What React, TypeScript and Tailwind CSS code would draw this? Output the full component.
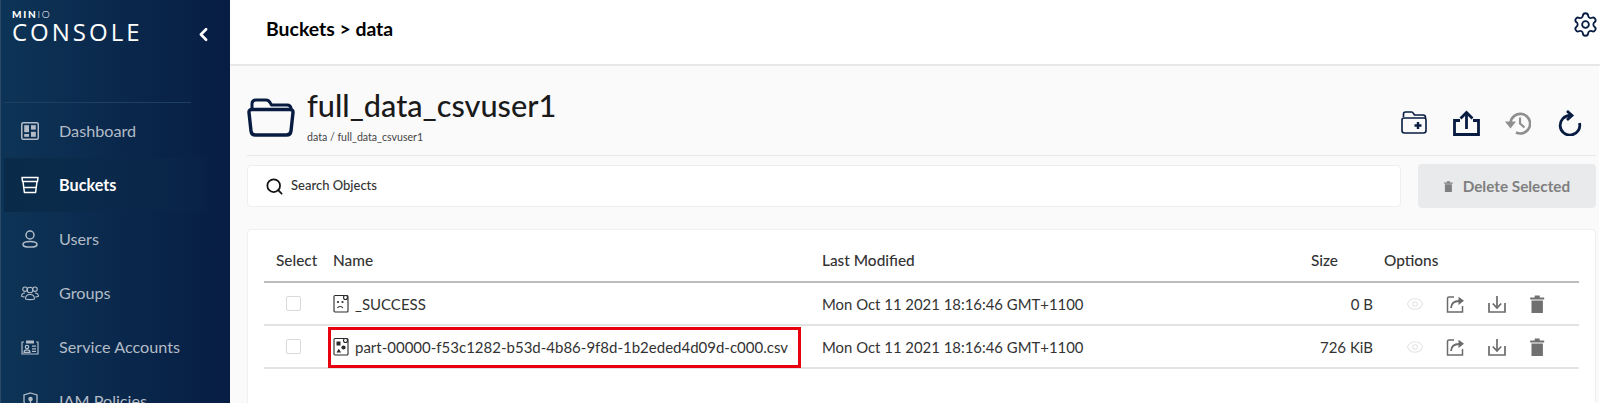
import { ChevronLeft, Settings, Search, Eye } from "lucide-react";

const NAVY = "#081c42";

function DashboardIcon() {
  return (
    <svg width="18" height="18" viewBox="0 0 18 18" fill="none">
      <rect x="0.75" y="0.75" width="16.5" height="16.5" rx="1.5" stroke="currentColor" strokeWidth="1.5" />
      <rect x="3.2" y="3.2" width="4.8" height="7" fill="currentColor" />
      <rect x="10" y="3.2" width="4.8" height="4.4" fill="currentColor" />
      <rect x="3.2" y="12" width="4.8" height="2.8" fill="currentColor" />
      <rect x="10" y="9.800" width="4.8" height="5" fill="currentColor" />
    </svg>
  );
}

function BucketIcon() {
  return (
    <svg width="18" height="18" viewBox="0 0 18 18" fill="none" stroke="currentColor" strokeWidth="1.5" strokeLinejoin="round">
      <path d="M1 1.5h16l-.5 4H1.5z" />
      <path d="M2 5.5l1.4 11h11.2l1.4-11" />
      <path d="M2.6 11.5h12.8" />
    </svg>
  );
}

function UserIcon() {
  return (
    <svg width="16" height="18" viewBox="0 0 16 18" fill="none" stroke="currentColor" strokeWidth="1.5">
      <circle cx="8" cy="5" r="4" />
      <path d="M1 14.5c0-2 2.500-3 7-3s7 1 7 3-1.500 2.500-7 2.500-7-.5-7-2.500z" />
    </svg>
  );
}

function GroupsIcon() {
  return (
    <svg width="18" height="16" viewBox="0 0 18 16" fill="none" stroke="currentColor" strokeWidth="1.1">
      <circle cx="9" cy="5" r="2.8" />
      <path d="M4.500 14c0-3 1.800-4.500 4.500-4.500s4.500 1.500 4.500 4.500c-2 .8-7 .8-9 0z" />
      <circle cx="4" cy="4.200" r="2.200" />
      <circle cx="14" cy="4.200" r="2.200" />
      <path d="M4 8C2 8 .6 9.300.6 11.200c.7.500 1.800.7 3 .7" />
      <path d="M14 8c2 0 3.400 1.300 3.400 3.200-.7.500-1.800.7-3 .7" />
    </svg>
  );
}

function AccountsIcon() {
  return (
    <svg width="18" height="15" viewBox="0 0 18 15" fill="none" stroke="currentColor" strokeWidth="1.200">
      <path d="M3 2H1v12h16V2h-2" />
      <rect x="5" y="0.6" width="8" height="3" rx="0.6" fill="currentColor" stroke="none" />
      <circle cx="6" cy="7" r="1.700" />
      <path d="M3 12.400c0-2 1.200-2.600 3-2.600s3 .6 3 2.600z" />
      <path d="M11 6.200h4M11 8.800h4M11 11.400h4" />
    </svg>
  );
}

function ShieldIcon() {
  return (
    <svg width="15" height="18" viewBox="0 0 15 18" fill="none" stroke="currentColor" strokeWidth="1.300">
      <path d="M7.500 1l6.500 2v6c0 4-3 6.500-6.500 8C4 15.500 1 13 1 9V3z" />
      <circle cx="7.500" cy="7" r="1.600" fill="currentColor" />
      <path d="M7.500 8v4" />
    </svg>
  );
}

function FolderIcon() {
  return (
    <svg width="48" height="39" viewBox="0 0 48 39" fill="none" stroke={NAVY} strokeLinejoin="round">
      <path d="M5 11V6c0-2.500 1.500-4 4-4h10c2 0 3 .8 4 2.500L24.500 7H40c2.500 0 4 1.500 4 4" strokeWidth="3" />
      <path d="M5 11.500h38c2 0 3.200 1 3 3l-2 18.500c-.3 2.500-2 4-4.500 4h-31C6 37 4.300 35.500 4 33L2 14.500c-.2-2 1-3 3-3z" strokeWidth="3.400" />
    </svg>
  );
}

function FolderPlusIcon() {
  return (
    <svg width="26" height="23" viewBox="0 0 26 23" fill="none" stroke={NAVY} strokeWidth="1.600" strokeLinejoin="round">
      <path d="M2.500 6V3c0-1 .7-2 2-2h6c1 0 1.500.5 2 1.500L13.500 4H22c1.500 0 2.500 1 2.500 2.500V7" />
      <path d="M3 7h20c1.300 0 2 .7 2 2v10.500c0 1.500-1 2.500-2.500 2.500h-19C2 22 1 21 1 19.500V9c0-1.300.7-2 2-2z" />
      <path d="M17 11v7M13.500 14.500h7" strokeWidth="2.400" />
    </svg>
  );
}

function UploadIcon() {
  return (
    <svg width="27" height="26" viewBox="0 0 27 26" fill="none" stroke={NAVY} strokeWidth="2.800">
      <path d="M7 10.500H1.500V24.500H25.500V10.500H20" />
      <path d="M13.500 19V2.500" />
      <path d="M7.500 8.500L13.500 2.500 19.500 8.500" />
    </svg>
  );
}

function HistoryIcon() {
  return (
    <svg width="26" height="24" viewBox="0 0 26 24" fill="none" stroke="#8f8f8f" strokeWidth="2.600">
      <path d="M5.500 12A9.800 9.800 0 1 1 11 21.500" />
      <path d="M0 10.500h11L5.500 17.500z" fill="#8f8f8f" stroke="none" />
      <path d="M15 6.500V12.500L19.500 16.500" strokeWidth="2.200" />
    </svg>
  );
}

function RefreshIcon() {
  return (
    <svg width="24" height="26" viewBox="0 0 24 26" fill="none" stroke={NAVY} strokeWidth="2.800">
      <path d="M12 5.500A9.800 9.800 0 1 0 21.500 13" />
      <path d="M9 1l5 4.500L9 10" />
    </svg>
  );
}

function ShareIcon() {
  return (
    <svg width="19" height="18" viewBox="0 0 19 18" fill="none" stroke="#6b6b6b" strokeWidth="1.500">
      <path d="M8 2H3a1.500 1.500 0 0 0-1.500 1.500V17h15v-6" />
      <path d="M5 13c.3-4.500 3.500-7 8-7" strokeWidth="1.800" />
      <path d="M12.500 1.800L18 5.800l-5.500 4.200z" fill="#6b6b6b" stroke="none" />
    </svg>
  );
}

function DownloadIcon() {
  return (
    <svg width="18" height="18" viewBox="0 0 18 18" fill="none" stroke="#6b6b6b" strokeWidth="1.700">
      <path d="M1 8v9h16V8" />
      <path d="M9 1v11" />
      <path d="M4.800 8.500L9 13l4.200-4.500" />
    </svg>
  );
}

function TrashFilled({ color = "#707070", size = 18 }: { color?: string; size?: number }) {
  return (
    <svg width={size * 0.8} height={size} viewBox="0 0 14 18" fill={color}>
      <path d="M0 2.500h14v2H0zM4.500 .500h5v2h-5zM1.300 5.500h11.400V18H1.300z" />
    </svg>
  );
}

function FileOne() {
  return (
    <svg width="16" height="19" viewBox="0 0 16 19" fill="none" stroke="#2a2a2a" strokeWidth="1.100">
      <rect x="1" y="1.500" width="14" height="16.500" rx="1" />
      <circle cx="12.500" cy="3.500" r="2" fill="#fff" />
      <circle cx="5" cy="8" r="1.100" fill="#2a2a2a" stroke="none" />
      <circle cx="9.500" cy="8" r="1.100" fill="#2a2a2a" stroke="none" />
      <path d="M4.500 14c.8-2 4.200-2 5.500 0" />
    </svg>
  );
}

function FileTwo() {
  return (
    <svg width="16" height="19" viewBox="0 0 16 19" fill="none" stroke="#2a2a2a" strokeWidth="1.100">
      <rect x="1" y="1.500" width="14" height="16.500" rx="1" />
      <circle cx="12.500" cy="3.500" r="2" fill="#fff" />
      <rect x="3.500" y="4.500" width="4" height="4" fill="#2a2a2a" stroke="none" />
      <circle cx="10.500" cy="10.500" r="2.100" fill="#2a2a2a" stroke="none" />
      <path d="M3.500 15.500l2.300-3.800 2.300 3.800z" fill="#2a2a2a" stroke="none" />
    </svg>
  );
}

const navItems = [
  { label: "Dashboard", icon: <DashboardIcon /> },
  { label: "Buckets", icon: <BucketIcon />, active: true },
  { label: "Users", icon: <UserIcon /> },
  { label: "Groups", icon: <GroupsIcon /> },
  { label: "Service Accounts", icon: <AccountsIcon /> },
  { label: "IAM Policies", icon: <ShieldIcon /> },
];

const rows = [
  { name: "_SUCCESS", icon: <FileOne />, modified: "Mon Oct 11 2021 18:16:46 GMT+1100", size: "0 B" },
  { name: "part-00000-f53c1282-b53d-4b86-9f8d-1b2eded4d09d-c000.csv", icon: <FileTwo />, modified: "Mon Oct 11 2021 18:16:46 GMT+1100", size: "726 KiB" },
];

export default function App() {
  return (
    <div className="flex h-screen w-full overflow-hidden bg-white font-['Lato',sans-serif]">
      <aside className="w-[230px] shrink-0 bg-gradient-to-r from-[#0d3456] to-[#081d43] border-l border-[#2a4a68]">
        <div className="relative ml-[3px] mr-[39px] h-[103px] border-b border-[#1d3f60]">
          <div className="pl-[8px] pt-[9px]">
            <div className="text-[10px] leading-[10px] tracking-[1.7px] text-white"><span className="font-black">MIN</span><span className="font-light">IO</span></div>
            <div className="font-['Open_Sans',sans-serif] text-[24px] font-normal leading-[25px] tracking-[3px] text-white">CONSOLE</div>
          </div>
          <ChevronLeft className="absolute left-[189px] top-[24px] text-white" size={21} strokeWidth={3} />
        </div>
        <nav className="ml-[3px] mr-[23px] pt-[1px]">
          {navItems.map((item) => (
            <div key={item.label} className={`flex h-[54px] items-center ${item.active ? "bg-gradient-to-r from-[#0a2a49] to-[#0a2649]/20 font-bold text-white" : "text-[#b3bcc7]"}`}>
              <div className="flex w-[55px] justify-center pl-[6px] pr-[9px]">{item.icon}</div>
              <span className="text-[16.2px] leading-none">{item.label}</span>
            </div>
          ))}
        </nav>
      </aside>

      <main className="flex min-w-0 flex-1 flex-col">
        <header className="flex h-[66px] shrink-0 items-start justify-between border-b-2 border-[#e8e8e8] pl-[36px]">
          <h1 className="pt-[18px] text-[19.4px] font-bold leading-[22px] text-black">Buckets &gt; data</h1>
          <Settings className="mr-px mt-[11px]" size={27} strokeWidth={1.6} color={NAVY} />
        </header>

        <div className="mr-px flex-1 bg-[#fafafa] pl-[17px] pr-[3px]">
          <div className="flex h-[90px] border-b border-[#e8e8e8]">
            <div className="pt-[32px]"><FolderIcon /></div>
            <div className="pl-[12px]">
              <div className="pt-[22px] text-[30.7px] font-medium leading-[36px] text-[#1a1a1a]">full_data_csvuser1</div>
              <div className="pt-[7px] text-[10.6px] leading-[12px] text-[#444]">data / full_data_csvuser1</div>
            </div>
            <div className="ml-auto flex items-center pt-[24px]">
              <div className="flex w-[52px] justify-center"><FolderPlusIcon /></div>
              <div className="flex w-[52px] justify-center"><UploadIcon /></div>
              <div className="flex w-[52px] justify-center"><HistoryIcon /></div>
              <div className="flex w-[52px] justify-center"><RefreshIcon /></div>
            </div>
          </div>

          <div className="mt-[8px] flex h-[44px] gap-[17px]">
            <div className="my-px flex flex-1 items-center rounded-[4px] border border-[#eeeeee] bg-white pl-[17px]">
              <Search size={19} strokeWidth={2.2} color="#111" />
              <span className="pl-[7px] text-[13px] font-medium text-[#333]">Search Objects</span>
            </div>
            <button className="flex w-[178px] items-center justify-center gap-[10px] rounded-[4px] bg-[#e9eaec] text-[15.3px] font-bold text-[#7f7f7f]">
              <TrashFilled color="#7f7f7f" size={11} />
              Delete Selected
            </button>
          </div>

          <div className="relative mt-[21px] h-[200px] rounded-[4px] border border-[#f0f0f0] bg-white px-[16px]">
            <div className="flex h-[53px] items-end border-b-2 border-[#bdbdbd] pb-[12px] text-[15.4px] font-medium leading-[18px] text-[#333]">
              <div className="w-[69px] pl-[12px]">Select</div>
              <div className="w-[489px]">Name</div>
              <div className="flex-1">Last Modified</div>
              <div className="w-[60px] text-right">Size</div>
              <div className="w-[241px] pl-[46px]">Options</div>
            </div>
            {rows.map((row) => (
              <div key={row.name} className="flex h-[43px] items-center border-b-2 border-[#e3e3e3] text-[15px] leading-[18px] text-[#333] last:border-b">
                <div className="w-[69px] pl-[22px]">
                  <div className="h-[15px] w-[15px] rounded-[2px] border border-[#d9d9d9]" />
                </div>
                <div className="flex w-[489px] items-center gap-[6px]">
                  {row.icon}
                  <span>{row.name}</span>
                </div>
                <div className="flex-1 text-[14.9px]">{row.modified}</div>
                <div className="w-[95px] text-right">{row.size}</div>
                <div className="flex w-[206px] items-center pl-[21px]">
                  <div className="flex w-[41px] justify-center"><Eye size={18} strokeWidth={1.5} color="#e6e6e6" /></div>
                  <div className="flex w-[41px] justify-center"><ShareIcon /></div>
                  <div className="flex w-[41px] justify-center"><DownloadIcon /></div>
                  <div className="flex w-[41px] justify-center"><TrashFilled /></div>
                </div>
              </div>
            ))}
            <div className="absolute left-[80px] top-[97px] h-[41px] w-[473px] border-[3px] border-[#e8000f]" />
          </div>
        </div>
      </main>
    </div>
  );
}
